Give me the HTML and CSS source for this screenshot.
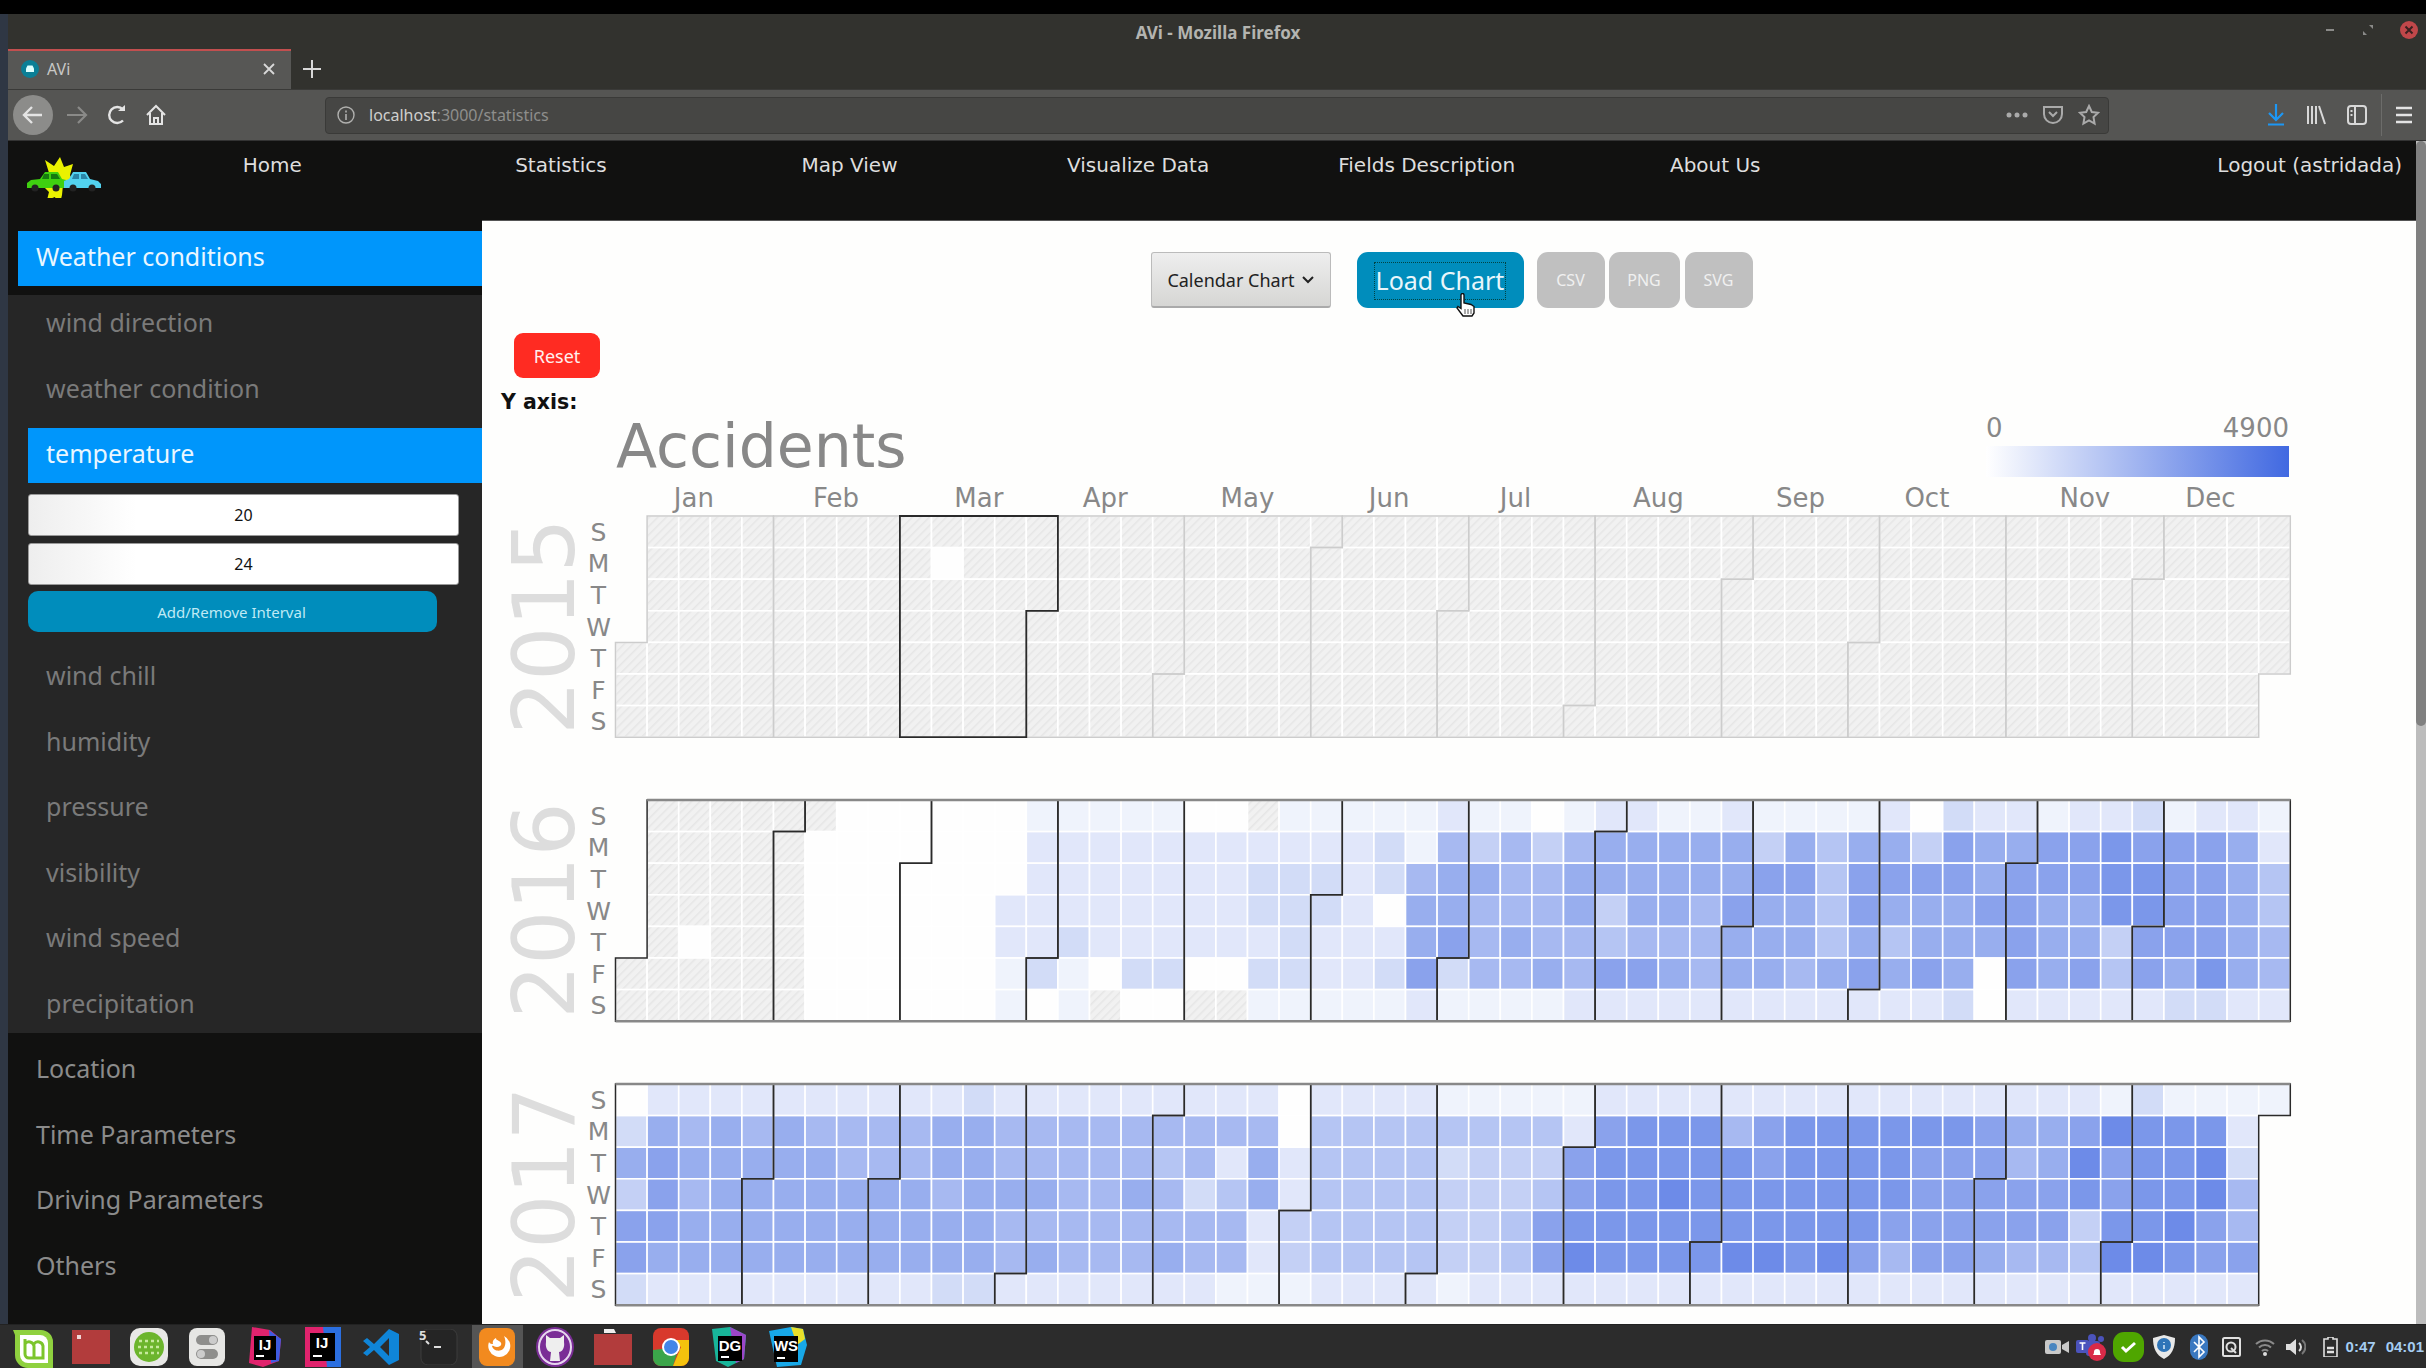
FILE: index.html
```html
<!DOCTYPE html>
<html lang="en">
<head>
    <meta charset="UTF-8">
    <title>AVi - Mozilla Firefox</title>
    <link rel="stylesheet" href="styles.css">
</head>
<body>
<div class="screen">
    <div class="topband"></div>
    <div class="window">
        <div class="titlebar">
            <span class="title">AVi - Mozilla Firefox</span>
            <div class="winctl">
                <svg width="14" height="14" viewBox="0 0 14 14"><path d="M3 7h8" stroke="#8a8a88" stroke-width="2"/></svg>
                <svg width="14" height="14" viewBox="0 0 14 14"><path d="M8 2h4v4zM6 12H2V8z" fill="#8a8a88"/></svg>
                <svg width="20" height="20" viewBox="0 0 20 20"><circle cx="10" cy="10" r="9" fill="#c0474a"/><path d="M6.500 6.500l7 7M13.500 6.500l-7 7" stroke="#3a2020" stroke-width="2"/></svg>
            </div>
        </div>
        <div class="tabbar">
            <div class="tab">
                <svg class="favicon" width="18" height="18" viewBox="0 0 18 18"><circle cx="9" cy="9" r="9" fill="#0b7f96"/><path d="M5 12V8.500l1.500-3h5l1.500 3V12z" fill="#dff"/></svg>
                <span class="tab-name">AVi</span>
                <svg width="14" height="14" viewBox="0 0 14 14"><path d="M2 2l10 10M12 2L2 12" stroke="#d8d8d8" stroke-width="1.800"/></svg>
            </div>
            <svg class="newtab" width="18" height="18" viewBox="0 0 18 18"><path d="M9 0v18M0 9h18" stroke="#d8d8d8" stroke-width="2"/></svg>
        </div>
        <div class="toolbar">
            <div class="back">
                <svg width="22" height="22" viewBox="0 0 22 22"><path d="M20 11H3M10 3l-8 8 8 8" fill="none" stroke="#e4e4e4" stroke-width="2.400"/></svg>
            </div>
            <svg class="tool-btn" width="22" height="22" viewBox="0 0 22 22"><path d="M1 11h18M12 3l8 8-8 8" fill="none" stroke="#8a8a88" stroke-width="2.200"/></svg>
            <svg class="tool-btn" width="20" height="22" viewBox="0 0 20 22"><path d="M16 16.500A8 8 0 1 1 16 5.500" fill="none" stroke="#e4e4e4" stroke-width="2.400"/><path d="M11 7h7V1z" fill="#e4e4e4"/></svg>
            <svg class="tool-btn" width="20" height="22" viewBox="0 0 20 22"><path d="M1 11l9-9 9 9M4 9v11h12V9M8 20v-6h4v6" fill="none" stroke="#e4e4e4" stroke-width="2"/></svg>
            <div class="urlbar">
                <svg width="18" height="18" viewBox="0 0 18 18"><circle cx="9" cy="9" r="8" fill="none" stroke="#b0b0ae" stroke-width="1.400"/><path d="M9 8v6M9 4.500v2" stroke="#b0b0ae" stroke-width="1.600"/></svg>
                <span class="url"><b>localhost</b>:3000/statistics</span>
                <svg class="url-dots" width="22" height="6" viewBox="0 0 22 6"><circle cx="3" cy="3" r="2.500" fill="#aaa"/><circle cx="11" cy="3" r="2.500" fill="#aaa"/><circle cx="19" cy="3" r="2.500" fill="#aaa"/></svg>
                <svg width="22" height="20" viewBox="0 0 22 20"><path d="M2 2h18v7a9 9 0 0 1-18 0z" fill="none" stroke="#aaa" stroke-width="2"/><path d="M7 7l4 4 4-4" fill="none" stroke="#aaa" stroke-width="2"/></svg>
                <svg width="22" height="22" viewBox="0 0 22 22"><path d="M11 2l2.800 6 6.200.800-4.500 4.300 1.100 6.400-5.600-3.100-5.600 3.100 1.100-6.400L2 8.800 8.200 8z" fill="none" stroke="#aaa" stroke-width="2"/></svg>
            </div>
            <div class="tool-right">
                <svg width="18" height="22" viewBox="0 0 18 22"><path d="M9 0v16M2 9l7 7 7-7M1 20.500h16" fill="none" stroke="#1c97f5" stroke-width="2.200"/></svg>
                <svg width="20" height="20" viewBox="0 0 20 20"><path d="M2 1v18M6 1v18M10 1v18M13 1l6 18" fill="none" stroke="#d8d8d8" stroke-width="2"/></svg>
                <svg width="20" height="20" viewBox="0 0 20 20"><rect x="1" y="1" width="18" height="18" rx="3" fill="none" stroke="#d8d8d8" stroke-width="2"/><path d="M8 1v18M3.500 6h2M3.500 10h2" stroke="#d8d8d8" stroke-width="2"/></svg>
                <span class="tool-sep"></span>
                <svg width="16" height="18" viewBox="0 0 16 18"><path d="M0 2h16M0 9h16M0 16h16" stroke="#e4e4e4" stroke-width="2.400"/></svg>
            </div>
        </div>
        <div class="page">
            <div class="site">
                <nav class="nav">
                    <div class="logo">
                        <svg width="74" height="41" viewBox="0 0 74 41">
                            <path d="M18 3l9 6 6-9 4 10 9-3-3 11 3 7-10 3-1 10 -3 13-4-11-8 3 2-8-6-6 7-10z" fill="#eaf200"/>
                            <path d="M0 31v-5l4-3 9-1 5-7h13l4 7 4 1v8z" fill="#3fd010"/>
                            <path d="M17 17h5v5h-7zM24 17h6l3 5h-9z" fill="#167a10"/>
                            <path d="M37 31v-7l5-2 4-7h13l4 7 8 2 3 3v4z" fill="#52d2ee"/>
                            <path d="M47 17h5v5h-7zM54 17h4l3 5h-7z" fill="#2a86a8"/>
                            <circle cx="8" cy="31" r="3.500" fill="#222"/><circle cx="29" cy="31" r="3.500" fill="#222"/><circle cx="46" cy="31" r="3.500" fill="#222"/><circle cx="65" cy="31" r="3.500" fill="#222"/>
                        </svg>
                    </div>
                    <ul class="nav-links">
                        <li>Home</li>
                        <li>Statistics</li>
                        <li>Map View</li>
                        <li>Visualize Data</li>
                        <li>Fields Description</li>
                        <li>About Us</li>
                    </ul>
                    <span class="logout">Logout (astridada)</span>
                </nav>
                <div class="body-row">
                    <aside class="sidebar">
                        <div class="side-main current">Weather conditions</div>
                        <div class="side-group">
                            <div class="side-sub">wind direction</div>
                            <div class="side-sub">weather condition</div>
                            <div class="side-sub current">temperature</div>
                            <div class="interval">
                                <input class="interval-input" type="text" value="20">
                                <input class="interval-input" type="text" value="24">
                                <button class="interval-btn">Add/Remove Interval</button>
                            </div>
                            <div class="side-sub">wind chill</div>
                            <div class="side-sub">humidity</div>
                            <div class="side-sub">pressure</div>
                            <div class="side-sub">visibility</div>
                            <div class="side-sub">wind speed</div>
                            <div class="side-sub">precipitation</div>
                        </div>
                        <div class="side-main">Location</div>
                        <div class="side-main">Time Parameters</div>
                        <div class="side-main">Driving Parameters</div>
                        <div class="side-main">Others</div>
                    </aside>
                    <main class="content">
                        <div class="controls">
                            <div class="chart-select">Calendar Chart
                                <svg width="12" height="8" viewBox="0 0 12 8"><path d="M1 1l5 5 5-5" fill="none" stroke="#222" stroke-width="2"/></svg>
                            </div>
                            <button class="load-btn"><span class="load-focus">Load Chart</span>
                                <svg class="hand" width="22" height="24" viewBox="0 0 22 24"><path d="M6 2a1.500 1.500 0 0 1 3 0v8l7 1.500 3 2V20l-2 3H8l-6-8 1-1.500 3 2z" fill="#fff" stroke="#111" stroke-width="1.400"/><path d="M10 16v5M13 16v5M16 16v5" stroke="#555"/></svg>
                            </button>
                            <button class="export-btn csv">CSV</button>
                            <button class="export-btn png">PNG</button>
                            <button class="export-btn svg">SVG</button>
                        </div>
                        <button class="reset-btn">Reset</button>
                        <div class="y-axis">Y axis:</div>
                        <div class="chart-head">
                            <h1 class="chart-title">Accidents</h1>
                            <div class="legend">
                                <div class="legend-labels"><span>0</span><span>4900</span></div>
                                <div class="legend-bar"></div>
                            </div>
                        </div>
                        <div id="calendar"></div>
                    </main>
                </div>
            </div>
            <div class="scrollbar"><div class="scroll-thumb"></div></div>
        </div>
    </div>
    <div class="taskbar">
        <div class="launchers">
            <span class="launcher"><svg width="42" height="42" viewBox="0 0 42 42"><path d="M1 4h28a12 12 0 0 1 12 12v26H16A13 13 0 0 1 3 29V9z" fill="#8fd13f"/><path d="M8 9h20a8 8 0 0 1 8 8v20H16a8 8 0 0 1-8-8z" fill="#fff"/><path d="M13 13v15a4 4 0 0 0 4 4h14V20a5 5 0 0 0-9-2M22 31V20a5 5 0 0 0-9-2" fill="none" stroke="#7cc52c" stroke-width="3"/></svg></span>
            <span class="launcher"><svg width="38" height="34" viewBox="0 0 38 34"><rect width="38" height="34" fill="#b23c3c"/><rect x="5" y="5" width="4" height="4" fill="#f0d8d8"/></svg></span>
            <span class="launcher"><svg width="38" height="38" viewBox="0 0 38 38"><rect width="38" height="38" rx="10" fill="#e8e8e6"/><circle cx="19" cy="19" r="15" fill="#6cb52d"/><path d="M9 13h20M8 19h22M9 25h20" stroke="#c6ea9d" stroke-width="2.500" stroke-dasharray="3 3"/></svg></span>
            <span class="launcher"><svg width="36" height="38" viewBox="0 0 36 38"><rect width="36" height="38" rx="8" fill="#e6e6e4"/><rect x="7" y="7" width="22" height="10" rx="5" fill="#8e8e8c"/><rect x="7" y="21" width="22" height="10" rx="5" fill="#8e8e8c"/><circle cx="24" cy="12" r="4" fill="#ccc"/><circle cx="12" cy="26" r="4" fill="#ccc"/></svg></span>
            <span class="launcher"><svg width="36" height="40" viewBox="0 0 36 40"><path d="M5 0l18 3 11 9-2 22-16 6-14-4z" fill="#e0236d"/><path d="M22 3l12 9-2 22-8 2z" fill="#3f5be0"/><rect x="7" y="9" width="22" height="24" fill="#000"/><text x="18" y="23" class="jb-text">IJ</text><path d="M9 29h8" stroke="#fff" stroke-width="2"/></svg></span>
            <span class="launcher"><svg width="36" height="40" viewBox="0 0 36 40"><rect width="36" height="40" fill="#e0236d"/><path d="M18 0h18v40H22z" fill="#2b6fe0"/><rect x="5" y="6" width="25" height="28" fill="#000"/><text x="17" y="21" class="jb-text">IJ</text><path d="M8 29h9" stroke="#fff" stroke-width="2"/></svg></span>
            <span class="launcher"><svg width="38" height="38" viewBox="0 0 38 38"><path d="M27 1l10 5v26l-10 5-15-15-7 6-4-3 7-6-7-6 4-3 7 6zM27 10l-9 9 9 9z" fill="#0f85d8" fill-rule="evenodd"/></svg></span>
            <span class="launcher term"><svg width="38" height="36" viewBox="0 0 38 36"><rect width="36" height="36" x="1" rx="7" fill="#252525" stroke="#3c3c3c"/><path d="M6 12l3 3M14 18h7" stroke="#ddd" stroke-width="2"/></svg><span class="term-badge">5</span></span>
            <span class="launcher active"><svg width="36" height="38" viewBox="0 0 36 38"><rect width="36" height="38" rx="8" fill="#f28a1f"/><path d="M25 8a11 11 0 1 1-15 6c1 2 3 2 4 2-1-3 1-5 3-6 0 3 4 2 5 5 1 2-1 4-4 4-3 0-3-2-5-1 1 5 8 6 11 3 3-3 3-9 1-13z" fill="#fff"/></svg></span>
            <span class="launcher"><svg width="38" height="40" viewBox="0 0 38 40"><ellipse cx="19" cy="20" rx="19" ry="20" fill="#7a2d96"/><ellipse cx="19" cy="20" rx="16" ry="17" fill="none" stroke="#e6d6ee" stroke-width="2"/><path d="M10 8l4 3h10l4-3v7c1 6-2 10-5 10l1 9h-10l1-9c-3 0-6-4-5-10z" fill="#eee"/></svg></span>
            <span class="launcher"><svg width="38" height="36" viewBox="0 0 38 36"><path d="M10 0h10l2 4H10z" fill="#eee"/><rect y="5" width="38" height="31" fill="#b23c3c"/></svg></span>
            <span class="launcher"><svg width="36" height="38" viewBox="0 0 36 38"><rect width="36" height="38" rx="8" fill="#d8392c"/><path d="M0 22V30a8 8 0 0 0 8 8h12l6-19z" fill="#3ba54a"/><path d="M18 12h18v18a8 8 0 0 1-8 8h-8l8-19z" fill="#f4c20d"/><circle cx="18" cy="19" r="9" fill="#fff"/><circle cx="18" cy="19" r="7" fill="#4385e8"/></svg></span>
            <span class="launcher"><svg width="38" height="40" viewBox="0 0 38 40"><path d="M2 2l18-2 16 8-2 24-16 8-12-6z" fill="#18b59a"/><path d="M20 0l16 8-2 24-8 4z" fill="#9b46c8"/><rect x="8" y="9" width="24" height="25" fill="#000"/><text x="20" y="24" class="jb-text">DG</text><path d="M11 30h8" stroke="#fff" stroke-width="2"/></svg></span>
            <span class="launcher"><svg width="40" height="40" viewBox="0 0 40 40"><path d="M2 4l22-4 12 2 4 16-6 20-24 2z" fill="#17a8e8"/><path d="M24 0l12 2 2 10-8 6z" fill="#e8e02a"/><rect x="7" y="9" width="24" height="26" fill="#000"/><text x="19" y="24" class="jb-text">WS</text><path d="M10 31h8" stroke="#fff" stroke-width="2"/></svg></span>
        </div>
        <div class="tray">
            <svg width="24" height="14" viewBox="0 0 24 14"><rect width="16" height="14" rx="2" fill="#c9c9c9"/><circle cx="8" cy="7" r="4" fill="#4a86c0"/><path d="M17 5l7-4v12l-7-4z" fill="#c9c9c9"/></svg>
            <svg class="tray-tight" width="30" height="28" viewBox="0 0 30 28"><circle cx="16" cy="5" r="4" fill="#4b53bc"/><circle cx="25" cy="6" r="3" fill="#4b53bc"/><rect y="7" width="13" height="13" rx="2" fill="#4b53bc"/><path d="M3.500 10h6M6.500 10v7" stroke="#fff" stroke-width="1.600"/><rect x="10" y="8" width="14" height="15" rx="3" fill="#4b53bc"/><circle cx="21" cy="19" r="9" fill="#d92a48"/><path d="M17 22a4 4 0 0 0 1-3 3 3 0 0 1 6 0 4 4 0 0 0 1 3z" fill="#fff"/></svg>
            <svg class="tray-tight" width="31" height="30" viewBox="0 0 31 30"><rect width="31" height="30" rx="11" fill="#4fa600"/><path d="M9 15l4 4 9-8" fill="none" stroke="#fff" stroke-width="3"/></svg>
            <svg width="24" height="26" viewBox="0 0 24 26"><path d="M12 1l11 3c0 10-3 17-11 21C4 21 1 14 1 4z" fill="#e8e8e8"/><circle cx="12" cy="11" r="7" fill="#2f75b8"/><path d="M12 8v1M12 11v4" stroke="#cfe4f6" stroke-width="1.600"/></svg>
            <svg class="tray-wide" width="18" height="26" viewBox="0 0 18 26"><rect width="18" height="26" rx="9" fill="#3a78c0"/><path d="M4 8l10 10-5 5V3l5 5L4 18" fill="none" stroke="#fff" stroke-width="1.600"/></svg>
            <svg class="tray-wide" width="19" height="20" viewBox="0 0 19 20"><rect x="1" y="1" width="17" height="18" rx="1.500" fill="none" stroke="#e0e0e0" stroke-width="2"/><circle cx="9" cy="10" r="4.500" fill="none" stroke="#e0e0e0" stroke-width="2"/><path d="M9 11l5 5" stroke="#e0e0e0" stroke-width="2"/></svg>
            <svg class="tray-wide" width="20" height="18" viewBox="0 0 20 18"><path d="M1 6a13 13 0 0 1 18 0M4 9.500a8.500 8.500 0 0 1 12 0M7 13a4 4 0 0 1 6 0" fill="none" stroke="#8a8a8a" stroke-width="2"/><circle cx="10" cy="16" r="2" fill="#ddd"/></svg>
            <svg class="tray-mid" width="20" height="18" viewBox="0 0 20 18"><path d="M0 6h4l6-5v16l-6-5H0z" fill="#ddd"/><path d="M13 5a5 5 0 0 1 0 8" fill="none" stroke="#ddd" stroke-width="2"/><path d="M16 2a9 9 0 0 1 0 14" fill="none" stroke="#777" stroke-width="2"/></svg>
            <svg class="tray-batt" width="15" height="20" viewBox="0 0 15 20"><path d="M5 0h5v2h4v18H1V2h4z" fill="none" stroke="#e0e0e0" stroke-width="1.600"/><path d="M4 11h7M4 15h7" stroke="#e0e0e0" stroke-width="2.400"/></svg>
            <span class="clock">0:47</span>
            <span class="clock">04:01</span>
        </div>
    </div>
</div>
<script src="chart.js"></script>
</body>
</html>
```

FILE: styles.css
```css
*{
    margin: 0;
    padding: 0;
    box-sizing: border-box;
    list-style: none;
}
body{
    width: 2426px;
    height: 1368px;
    overflow: hidden;
    font-family: "Noto Sans", "DejaVu Sans", sans-serif;
}
.screen{
    width: 2426px;
    height: 1368px;
    background-color: #2f3744;
    display: flex;
    flex-direction: column;
}
.topband{
    height: 14px;
    background-color: #000;
}
.window{
    margin-left: 8px;
    height: 1310px;
    display: flex;
    flex-direction: column;
}

/* firefox chrome */
.titlebar{
    height: 35px;
    background-color: #32322e;
    display: flex;
    align-items: center;
    justify-content: center;
    padding: 2px 0 0 2px;
    position: relative;
}
.title{
    color: #b4b4b0;
    font-size: 17px;
    font-weight: bold;
}
.winctl{
    position: absolute;
    right: 7px;
    top: 6px;
    display: flex;
    align-items: center;
    gap: 24px;
}
.tabbar{
    height: 40px;
    background-color: #32322e;
    display: flex;
    align-items: center;
}
.tab{
    width: 283px;
    height: 40px;
    background-color: #575755;
    border-top: 2px solid #c24f4f;
    display: flex;
    align-items: center;
    padding: 0 15px 2px 13px;
    color: #c8c8c6;
    font-size: 16px;
}
.tab-name{
    margin-left: 8px;
    flex: 1;
}
.newtab{
    margin-left: 12px;
}
.toolbar{
    height: 52px;
    background-color: #555553;
    border-top: 1px solid #3a3a38;
    border-bottom: 1px solid #333;
    display: flex;
    align-items: center;
    padding-left: 5px;
}
.back{
    width: 40px;
    height: 40px;
    border-radius: 50%;
    background-color: #8c8c8a;
    display: flex;
    align-items: center;
    justify-content: center;
}
.tool-btn{
    margin-left: 13px;
}
.tool-btn + .tool-btn{
    margin-left: 19px;
}
.urlbar{
    width: 1784px;
    height: 37px;
    margin-left: 159px;
    background-color: #464644;
    border: 1px solid #3a3a38;
    border-radius: 4px;
    display: flex;
    align-items: center;
    padding: 0 8px 0 11px;
    gap: 14px;
}
.url{
    flex: 1;
    color: #8e8e8c;
    font-size: 16px;
}
.url b{
    font-weight: normal;
    color: #cfcfcd;
}
.tool-right{
    display: flex;
    align-items: center;
    margin-left: 158px;
    gap: 21px;
}
.tool-sep{
    width: 1px;
    height: 42px;
    background-color: #6c6c6a;
    margin: 0 -7px 0 -7px;
}

/* site */
.page{
    height: 1183px;
    display: flex;
}
.site{
    width: 2408px;
    display: flex;
    flex-direction: column;
}
.nav{
    height: 79px;
    background-color: #111110;
    display: flex;
    align-items: flex-start;
    color: #dedede;
    font-family: "DejaVu Sans", sans-serif;
    font-size: 20px;
}
.logo{
    width: 120px;
    padding: 16px 0 0 19px;
}
.nav-links{
    display: flex;
}
.nav-links li{
    width: 288.600px;
    text-align: center;
    line-height: 48px;
}
.logout{
    margin-left: auto;
    padding-right: 14px;
    line-height: 48px;
}
.body-row{
    height: 1104px;
    display: flex;
}
.sidebar{
    width: 474px;
    background-color: #111110;
    padding-top: 11px;
    font-size: 25px;
    color: #8b8b8b;
}
.side-main{
    height: 55px;
    line-height: 52px;
    padding-left: 18px;
    margin: 0 0 10.500px 10px;
}
.side-main.current{
    line-height: 50px;
}
.side-main.current, .side-sub.current{
    background-color: #0096fb;
    color: #eaf6ff;
}
.side-group{
    background-color: #262626;
    height: 738px;
    margin-top: -1.500px;
    margin-bottom: 9px;
    padding-top: 2px;
    color: #7a7a7a;
}
.side-sub{
    height: 55px;
    line-height: 50px;
    padding-left: 18px;
    margin: 0 0 10.500px 20px;
}
.interval ~ .side-sub{
    line-height: 52px;
}
.side-sub.current{
    margin-bottom: 11px;
}
.interval{
    margin: 0 0 15px 20px;
    display: flex;
    flex-direction: column;
    align-items: flex-start;
    gap: 7px;
}
.interval-input{
    width: 431px;
    height: 42px;
    border: 1px solid #999;
    border-radius: 3px;
    background: linear-gradient(to right, #eee, #fff 25%);
    text-align: center;
    font-family: inherit;
    font-size: 16px;
    color: #111;
}
.interval-btn{
    width: 409px;
    height: 41px;
    margin-top: -1px;
    border: 0;
    border-radius: 10px;
    background-color: #008dbc;
    color: #bfeaf5;
    font-family: inherit;
    font-size: 15px;
    margin-bottom: 2px;
    padding-right: 2px;
}
.content{
    width: 1934px;
    background-color: #fefefd;
    border-top: 1px solid #555;
    overflow: hidden;
}
.controls{
    display: flex;
    align-items: stretch;
    justify-content: center;
    height: 56px;
    margin-top: 31px;
    padding-left: 5px;
}
.chart-select{
    width: 180px;
    border: 1px solid #bbb;
    border-bottom: 2px solid #aaa;
    border-radius: 3px;
    background: linear-gradient(#eee, #d6d6d4);
    color: #222;
    font-size: 18px;
    display: flex;
    align-items: center;
    justify-content: center;
    gap: 7px;
}
.load-btn{
    width: 167px;
    margin-left: 26px;
    border: 0;
    border-radius: 11px;
    background-color: #008dbc;
    color: #e8f6fb;
    font-family: inherit;
    font-size: 25px;
    position: relative;
}
.load-focus{
    border: 1px dotted #044;
    padding: 0 1px 2px;
}
.hand{
    position: absolute;
    left: 98px;
    top: 41px;
}
.export-btn{
    border: 0;
    border-radius: 11px;
    background-color: #c0c0c0;
    color: #f0f0f0;
    font-family: inherit;
    font-size: 16px;
}
.csv{
    width: 68px;
    margin-left: 13px;
}
.png{
    width: 71px;
    margin-left: 4px;
}
.svg{
    width: 68px;
    margin-left: 5px;
}
.reset-btn{
    display: block;
    width: 86px;
    height: 45px;
    margin: 25px 0 0 32px;
    border: 0;
    border-radius: 9px;
    background-color: #ff2b22;
    color: #fff0ee;
    font-family: inherit;
    font-size: 18px;
}
.y-axis{
    margin: 9px 0 0 19px;
    color: #111;
    font-family: "DejaVu Sans", sans-serif;
    font-size: 20.500px;
    font-weight: bold;
    line-height: 30px;
}
.chart-head{
    display: flex;
    justify-content: space-between;
    width: 1807px;
    height: 63px;
    padding-left: 134px;
    font-family: "DejaVu Sans", sans-serif;
    color: #888;
}
.chart-title{
    font-size: 60px;
    font-weight: normal;
    line-height: 58px;
}
.legend{
    width: 303px;
    margin-top: -3px;
}
.legend-labels{
    display: flex;
    justify-content: space-between;
    font-size: 26px;
    line-height: 28px;
    margin-bottom: 4px;
}
.legend-bar{
    height: 31px;
    background: linear-gradient(to right, #fff, #4169e1);
}
#calendar{
    height: 844px;
}
.calendar text{
    font-family: "DejaVu Sans", sans-serif;
    text-anchor: middle;
}
.month{
    font-size: 26px;
    fill: #888;
}
.day{
    font-size: 25px;
    fill: #888;
}
.year{
    font-size: 85px;
    fill: #ddd;
}
.scrollbar{
    width: 10px;
    background-color: #bcbcbc;
}
.scroll-thumb{
    height: 585px;
    background-color: #808080;
    border-radius: 5px;
}

/* taskbar */
.taskbar{
    height: 44px;
    background-color: #2c2c2c;
    border-top: 1px solid #222;
    display: flex;
    align-items: center;
    justify-content: space-between;
    overflow: hidden;
}
.launchers{
    display: flex;
    padding-left: 4px;
}
.launcher{
    width: 58px;
    height: 43px;
    display: flex;
    align-items: center;
    justify-content: center;
    position: relative;
}
.launcher.active{
    background: linear-gradient(#555, #555) center / 51px 100% no-repeat;
}
.jb-text{
    fill: #fff;
    font-family: "Liberation Sans", sans-serif;
    font-size: 15px;
    font-weight: bold;
    text-anchor: middle;
}
.term-badge{
    position: absolute;
    left: 9px;
    top: 1px;
    color: #ddd;
    font-size: 13px;
    font-weight: bold;
}
.tray{
    display: flex;
    align-items: center;
    gap: 8px;
    padding-right: 2px;
}
.tray-tight{
    margin-left: -1px;
}
.tray-wide{
    margin-left: 6px;
}
.tray-mid{
    margin-left: 3px;
}
.tray-batt{
    margin-left: 9px;
}
.clock{
    color: #a5cdf2;
    font-family: "Liberation Sans", sans-serif;
    font-size: 15px;
    font-weight: bold;
}
.clock:last-child{
    margin-left: 2px;
}
```

FILE: chart.js
```js
// rows are Sunday..Saturday, 53 week columns. x = no data, digits/a = shade level
var cellData = {
    2016: [
        '.xxxxxx000 0001111100 x111112110 1221121111 2032212231 221',
        '.xxxxx0000 0002222222 2222316464 6777774757 7487788988 872',
        '.xxxxx0000 0002222222 3332367766 7777778858 8887888998 875',
        '.xxxxx0000 0022222222 3332077666 7477687758 7778877998 875',
        '.x0xxx0000 0022322222 2322278676 6566677757 5777877488 876',
        'xxxxxx0000 0013103300 3322383667 6887677678 7870878587 976',
        'xxxxxx0000 00101x00xx 1111121111 2222222222 2230222223 322'
    ],
    2017: [
        '0222222222 2322222222 2022221111 1222222222 2222222131 111',
        '3767676666 7766666666 6055555555 2899968999 9998778a99 92.',
        '7877777666 7766666562 7255553444 8999998999 988867a899 a3.',
        '4867777777 6777667635 7255554445 899a999999 9888889899 a6.',
        '8877777777 7766666666 2455554458 9999999999 888888499a 86.',
        '8777777777 7767666766 2455554458 a9999aa9a8 6887665aa9 88.',
        '3222222222 3322222221 1122221222 2222222222 2222222222 22.'
    ]
};

var size = 31.6;
var left = 133.5;
var yearTops = { 2015: 36, 2016: 320, 2017: 604 };
var monthNames = ['Jan','Feb','Mar','Apr','May','Jun','Jul','Aug','Sep','Oct','Nov','Dec'];
var monthCols = [2.48, 6.98, 11.5, 15.5, 20, 24.48, 28.48, 33, 37.5, 41.5, 46.5, 50.47];
var dayNames = ['S','M','T','W','T','F','S'];

function weekOf(d) {
    var jan1 = new Date(Date.UTC(d.getUTCFullYear(), 0, 1));
    var dayNum = Math.round((d - jan1) / 86400000);
    return Math.floor((dayNum + jan1.getUTCDay()) / 7);
}

function shade(level) {
    var t = parseInt(level, 16) / 13;
    var r = Math.round(254 - 189 * t);
    var g = Math.round(254 - 149 * t);
    var b = Math.round(254 - 29 * t);
    return 'rgb(' + r + ',' + g + ',' + b + ')';
}

function cellLevel(year, row, col) {
    if (year === 2015) {
        return (row === 1 && col === 10) ? '0' : 'x';
    }
    return cellData[year][row].replace(/ /g, '').charAt(col);
}

function monthPath(year, month) {
    var t0 = new Date(Date.UTC(year, month, 1));
    var t1 = new Date(Date.UTC(year, month + 1, 0));
    var d0 = t0.getUTCDay(), w0 = weekOf(t0);
    var d1 = t1.getUTCDay(), w1 = weekOf(t1);
    return 'M' + (w0 + 1) * size + ',' + d0 * size +
        'H' + w0 * size + 'V' + 7 * size +
        'H' + w1 * size + 'V' + (d1 + 1) * size +
        'H' + (w1 + 1) * size + 'V0H' + (w0 + 1) * size + 'Z';
}

function drawYear(year) {
    var out = '<g transform="translate(' + left + ',' + yearTops[year] + ')">';
    out += '<text class="year" transform="translate(-41.5,' + 3.5 * size + ') rotate(-90)">' + year + '</text>';
    for (var i = 0; i < 7; i++) {
        out += '<text class="day" x="-17" y="' + ((i + 0.5) * size + 9) + '">' + dayNames[i] + '</text>';
    }
    for (var d = new Date(Date.UTC(year, 0, 1)); d.getUTCFullYear() === year; d.setUTCDate(d.getUTCDate() + 1)) {
        var row = d.getUTCDay();
        var col = weekOf(d);
        var level = cellLevel(year, row, col);
        var fill = level === 'x' ? 'url(#nodata)' : shade(level);
        out += '<rect x="' + col * size + '" y="' + row * size + '" width="' + size + '" height="' + size +
            '" fill="' + fill + '" stroke="#fff" stroke-width="1.600"/>';
    }
    var quiet = year === 2015;
    for (var m = 0; m < 12; m++) {
        if (quiet && m === 2) continue;
        out += '<path d="' + monthPath(year, m) + '" fill="none" stroke="' + (quiet ? '#ccc' : '#2a2a2a') + '" stroke-width="1.500"/>';
    }
    if (quiet) {
        out += '<path d="' + monthPath(year, 2) + '" fill="none" stroke="#2a2a2a" stroke-width="1.800"/>';
    } else {
        var firstDay = new Date(Date.UTC(year, 0, 1)).getUTCDay();
        var topStart = firstDay === 0 ? 0 : size;
        var bottomEnd = year === 2017 ? 52 : 53;
        out += '<path d="M' + topStart + ',0H' + 53 * size + '" stroke="#888" stroke-width="2.500"/>';
        out += '<path d="M0,' + 7 * size + 'H' + bottomEnd * size + '" stroke="#888" stroke-width="2.500"/>';
    }
    return out + '</g>';
}

function drawCalendar() {
    var svg = '<svg class="calendar" width="1934" height="844" viewBox="0 0 1934 844">';
    svg += '<defs><pattern id="nodata" width="6" height="6" patternUnits="userSpaceOnUse" patternTransform="rotate(45)">' +
        '<rect width="6" height="6" fill="#f1f1f1"/><rect width="1.500" height="6" fill="#e6e6e6"/></pattern></defs>';
    for (var i = 0; i < 12; i++) {
        svg += '<text class="month" x="' + (left + monthCols[i] * size) + '" y="27">' + monthNames[i] + '</text>';
    }
    svg += drawYear(2015) + drawYear(2016) + drawYear(2017);
    document.getElementById('calendar').innerHTML = svg + '</svg>';
}

drawCalendar();
```
